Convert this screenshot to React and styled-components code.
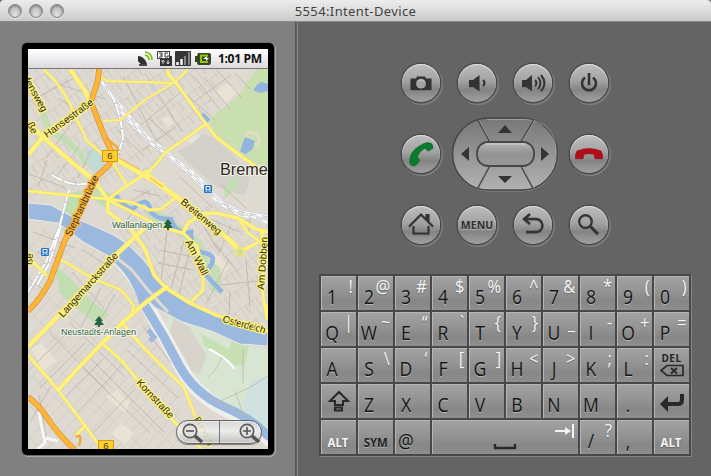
import React from "react";
import styled, { createGlobalStyle, css } from "styled-components";

const Global = createGlobalStyle`
  * { box-sizing: border-box; }
  html, body { margin: 0; padding: 0; overflow: hidden; background: #646464; }
`;

const Window = styled.div`
  width: 711px;
  height: 476px;
  display: flex;
  flex-direction: column;
  font-family: "Open Sans", "Noto Sans", sans-serif;
`;

const TitleBar = styled.header`
  height: 22px;
  flex: none;
  display: grid;
  grid-template-columns: 71px 1fr 71px;
  align-items: center;
  background: linear-gradient(#ececec, #dedede 45%, #cbcbcb);
  border-bottom: 1px solid #8b8b8b;
  border-radius: 4px 4px 0 0;
`;

const Lights = styled.div`
  display: flex;
  gap: 7px;
  padding-left: 8px;
`;

const Light = styled.span`
  width: 14px;
  height: 14px;
  border-radius: 50%;
  border: 1px solid #858585;
  background: radial-gradient(ellipse at 50% 90%, #e4e4e4, #c2c2c2 55%, #9e9e9e);
  box-shadow: inset 0 1px 2px #777, 0 1px 0 #eee;
`;

const Title = styled.h1`
  margin: 0;
  text-align: center;
  font: 400 13px/20px "Noto Sans", sans-serif;
  letter-spacing: 0.38px;
  color: #414141;
`;

const Body = styled.main`
  flex: 1;
  display: flex;
  min-height: 0;
`;

const DevicePane = styled.section`
  width: 295px;
  flex: none;
  padding: 21px 0 0 22px;
  background: #808080;
`;

const Divider = styled.div`
  width: 3px;
  flex: none;
  background: #606060;
  border-left: 1px solid #555;
  border-right: 1px solid #888;
`;

const Bezel = styled.div`
  width: 252px;
  height: 412px;
  padding: 6px;
  background: #000;
  border-radius: 5px;
  box-shadow: 0 0 0 1px #6b6b6b, 1px 1px 0 1px #a8a8a8;
`;

const Screen = styled.div`
  position: relative;
  width: 240px;
  height: 400px;
  overflow: hidden;
`;

const StatusBar = styled.div`
  height: 20px;
  display: flex;
  align-items: center;
  justify-content: flex-end;
  padding-right: 5px;
  background: linear-gradient(#fff, #efedf0 48%, #dddadd);
  border-bottom: 1px solid #777;
`;

const Clock = styled.time`
  font: 700 12.5px/19px "Open Sans", sans-serif;
  color: #111;
  width: 45px;
  margin-left: 5px;
  letter-spacing: -0.4px;
  white-space: nowrap;
  transform: scaleX(0.97);
  transform-origin: left;
`;

const Drawing = styled.svg`
  display: block;
  flex: none;
  overflow: ${(p) => (p.$clip ? "hidden" : "visible")};
`;

const ZoomControl = styled.div`
  position: absolute;
  left: 148px;
  top: 371px;
  width: 86px;
  height: 24px;
  display: flex;
  border: 1px solid #656565;
  border-radius: 12px;
  background: linear-gradient(#d5d5d5cc, #f0f0f0dd 45%, #bebebedd);
  box-shadow: 0 1px 1px #4449, inset 0 0 1px 1px #fff8;
`;

const ZoomHalf = styled.div`
  width: 42px;
  flex: none;
  padding-left: ${(p) => p.$pad}px;
  & + & { border-left: 1px solid #777; }
`;

const ControlPane = styled.section`
  flex: 1;
  padding: 26px 0 0 21px;
  background: #646464;
`;

const Pad = styled.div`
  width: 224px;
  margin-left: 74px;
  display: grid;
  grid-template-columns: repeat(4, 56px);
  grid-template-rows: repeat(3, 71px);
  place-items: center;
`;

const RoundButton = styled.button`
  width: 38px;
  height: 38px;
  margin-bottom: 1px;
  padding: 0;
  display: grid;
  place-items: center;
  border: 0;
  border-radius: 50%;
  background: linear-gradient(#bdbdbd, #a2a2a2 45%, #848484 68%, #a0a0a0);
  box-shadow: inset 0 1px 1px #dedede, 0 0 0 1.6px #4b4b4b, 1px 1px 0 2px #808080;
`;

const MenuText = styled.span`
  font: 700 10.5px/14px "Open Sans", sans-serif;
  letter-spacing: 0;
  color: #303030;
  text-shadow: 0 1px 0 #b9b9b9;
`;

const DPadSlot = styled.div`
  grid-column: span 2;
  margin-bottom: 1px;
`;

const Keyboard = styled.div`
  width: 372px;
  height: 182px;
  margin-top: 13px;
  padding: 2px;
  display: grid;
  grid-template-columns: repeat(10, 35px);
  grid-auto-rows: 34px;
  gap: 2px;
  background: #484848;
  box-shadow: 1px 1px 0 #858585;
`;

const Key = styled.button`
  grid-column: span ${(p) => p.$span || 1};
  display: grid;
  padding: 0;
  min-width: 0;
  border: 0;
  font-family: inherit;
  background: linear-gradient(#a3a3a3, #929292 50%, #868686 75%, #8f8f8f);
  box-shadow: inset 1px 1px 0 #b5b5b5;
  & > * { grid-area: 1 / 1; }
`;

const Main = styled.span`
  width: 22px;
  margin-top: 11px;
  font-size: 20px;
  line-height: 20px;
  display: flex;
  justify-content: center;
  transform: scaleX(0.88);
  color: #161616;
  text-shadow: 0 1px 0 #b4b4b4;
  align-self: start;
`;

const Alt = styled.span`
  justify-self: end;
  align-self: start;
  padding-right: 3px;
  font-size: 18px;
  line-height: 20px;
  transform: scaleX(0.92);
  transform-origin: right;
  color: #f5f5f5;
  text-shadow: 0 1px 1px #6a6a6a;
`;

const Word = styled.span`
  place-self: center;
  margin-top: 11px;
  font-size: 12px;
  font-weight: 700;
  line-height: 14px;
  transform: scaleX(0.95);
  ${(p) =>
    p.$dark
      ? css`color: #242424; text-shadow: 0 1px 0 #b4b4b4;`
      : css`color: #f5f5f5; text-shadow: 0 1px 1px #666;`}
`;

const DelKey = styled.span`
  display: flex;
  flex-direction: column;
  align-items: center;
  padding-top: 4px;
  font-size: 10px;
  font-weight: 700;
  line-height: 12px;
  letter-spacing: 0.5px;
  color: #242424;
`;

const KeyArt = styled.span`
  place-self: center;
`;

const SpaceArt = styled.span`
  align-self: stretch;
`;

const rail = [
  "M96 69 C108 96 130 116 147 136 S192 172 218 198 S250 214 268 219",
  "M98 76 C111 94 121 120 151 140 S194 182 222 203 L268 223",
  "M145 139 C170 158 201 173 210 192 S240 211 268 217",
];

const yellowRoads = [
  ["M43 69 Q59 82 70 104 L80 126 L87 141 L113 163 L128 187", 2.6],
  ["M70 69 L85 91 L91 103", 4.5],
  ["M28 155 L43 137 L67 118 L91 103", 4.5],
  ["M28 122 L43 137 L61 153 L80 169 L94 180", 4.5],
  ["M103 121 L120 120 L146 99 L175 82", 2.2],
  ["M98 75 L107 81 L175 83", 2.4],
  ["M168 69 L168 74 L176 83 L206 124 L217 138 L245 159 L268 174", 3.2],
  ["M188 69 L175 82", 2.4],
  ["M206 124 L166 152 L150 171 L119 191 L107 200", 3],
  ["M28 191 L66 195 L106 199 L131 202 L150 210 L161 209 L175 198", 3],
  ["M112 157 L133 169 L156 182 L178 198 L216 229 L233 243 L240 252", 5],
  ["M145 170 L154 180 L164 185", 3],
  ["M92 178 L101 190 L108 200 L108 212 L130 228 L145 249 L154 275 L166 288 L190 303 L216 315 L268 331", 3.6],
  ["M108 200 L128 210 L151 222 L172 230 L183 233", 3.2],
  ["M183 233 L188 223 L202 214 L215 213 L238 218 L256 229 L268 232", 3.6],
  ["M238 218 L248 233 L258 240", 2.8],
  ["M240 252 L262 240 L262 229", 3.6],
  ["M183 233 L197 246 L203 270 L203 290 L190 303", 3],
  ["M262 239 Q264 261 262 289 L267 320", 2.8],
  ["M152 221 L118 253 L91 281 L59 315 L28 347", 4.5],
  ["M28 257 L47 276", 3],
  ["M60 259 L90 277 L121 290 L134 306 L130 318", 2.6],
  ["M58 390 L85 361 L122 323 L145 303 L168 286", 4.2],
  ["M28 355 L58 390 L86 427 L102 449", 3],
  ["M102 343 L122 361 L143 387 L178 426 L202 449", 3],
  ["M122 323 L145 349 L167 371 L184 387 L195 416", 3],
  ["M85 426 L76 435", 3],
  ["M266 304 L268 318", 3],
];

const orangeRoads = [
  "M99 69 L98 80 L91 102 L104 135 L113 155 L109 165 L94 179 L79 212 L65 240 L50 281 Q40 300 28 311",
  "M28 397 Q39 405 48 419 T75 450",
];

const lanes = [
  "M28 102 L78 76 M58 98 L80 112 M74 120 L46 158 M61 85 L105 99 M80 145 L54 180 M91 150 L78 178 M134 131 L182 91 M117 130 L144 156 M150 119 L178 145 M142 151 L176 127 M123 76 L160 148 M145 73 L182 132",
  "M190 105 L213 88 L231 75 M182 91 L214 119 M204 77 L230 109 M216 69 L242 98 M193 75 L220 110 M235 73 L250 89",
  "M29 174 L66 188 M47 160 L38 187 M33 232 L75 248 M37 252 L60 259 M29 279 L47 292 M83 250 L106 265 M72 272 L104 308 M101 288 L81 327 M115 294 L91 336",
  "M28 371 L70 330 M39 389 L86 342 M64 398 L103 359 M76 414 L122 365 M93 433 L135 389 M49 332 L106 390 M70 323 L125 377 M82 367 L150 433 M89 357 L165 433 M50 388 L31 420 M39 395 L46 438 M127 350 L178 398 M143 326 L171 363",
  "M160 250 L198 258 M158 263 L194 270 M167 231 L161 282 M184 240 L171 289 M190 249 L179 294 M213 242 L238 272 M228 261 L206 304 M220 285 L258 281 M230 292 L229 315 M246 259 L250 307 M204 227 L219 252 M211 219 L239 232 M231 225 L219 253",
  "M133 190 L160 196 M119 207 L151 190 M133 210 L125 225 M180 177 L213 208 M220 184 L246 208 M251 211 L249 231",
];

const sideTracks =
  "M110 92Q121 112 123 139L118 154M52 175Q72 188 89 183M69 190L59 228L46 262L28 292M61 226L49 264L36 287";

function Label({ x, y, angle = 0, size = 10, children, ...rest }) {
  return (
    <text x={x} y={y} fontSize={size} transform={`rotate(${angle} ${x} ${y})`} {...rest}>
      {children}
    </text>
  );
}

function RouteSign({ x, y }) {
  return (
    <g>
      <rect x={x} y={y} width="15" height="11" fill="#ffce2c" stroke="#d29913" />
      <text x={x + 7.5} y={y + 8.5} textAnchor="middle" fontSize="9.5" strokeWidth="0">6</text>
    </g>
  );
}

function Tree({ x, y }) {
  return <path transform={`translate(${x} ${y})`} d="M0-5L4 0H2L5 4H1V6H-1V4H-5L-2 0H-4Z" fill="#24623f" />;
}

function Station({ x, y }) {
  return (
    <g transform={`translate(${x} ${y})`}>
      <rect width="8" height="8" rx="1" fill="#2878c1" />
      <path d="M2 1.5H6V5H2ZM2.5 6L1.5 7M5.5 6L6.5 7" fill="none" stroke="#fff" />
    </g>
  );
}

function CityMap() {
  return (
    <Drawing $clip width="240" height="380" viewBox="28 69 240 380">
      <defs>
        <pattern id="blocksA" width="13" height="17" patternUnits="userSpaceOnUse" patternTransform="rotate(-36)">
          <path d="M0 0H13M0 0V17M6 0V10" stroke="#c6beb4" strokeWidth=".8" fill="none" />
        </pattern>
        <pattern id="blocksB" width="10" height="23" patternUnits="userSpaceOnUse" patternTransform="rotate(43)">
          <path d="M0 0H10M0 0V23" stroke="#c8c0b7" strokeWidth=".8" fill="none" />
        </pattern>
      </defs>
      <path d="M28 69H268V449H28Z" fill="#dedad2" />
      <path d="M28 69H220L204 125L145 175L28 200Z" fill="url(#blocksA)" />
      <path d="M28 224L104 250L140 300L195 449H28Z" fill="url(#blocksB)" />
      <path d="M145 185L268 220V330L165 292L114 239Z" fill="url(#blocksA)" />
      <path d="M194 143L203 133L216 139L238 160L250 180L244 196L217 187L190 164L177 151Z" fill="#d3cfc9" />
      <path d="M216 91L227 83L239 91L225 104ZM162 119L168 116L174 123L168 127ZM185 139L195 132L200 137L191 143ZM31 349L41 343L57 361L43 371ZM106 397L116 390L130 402L125 413ZM112 434L121 423L134 433L125 445ZM210 252L221 257L229 269L217 276Z" fill="#e9e2d5" />
      <path d="M256 69H268V174L245 159L217 138L209 120L238 96Z" fill="#c9dfb0" />
      <path d="M253 90L258 84L262 82L268 84V91L260 93ZM240 151L245 137L255 141L252 150L245 154Z" fill="#91b5df" />
      <path d="M245 137Q249 128 257 135Q263 142 255 145" fill="none" stroke="#e5dcc5" strokeWidth="3" />
      <path d="M28 85Q37 92 43 113T62 137L80 153L87 165" fill="none" stroke="#c2ddb0" strokeWidth="6" />
      <path d="M86 149L99 151L105 164L97 174L87 163Z" fill="#c2dad4" />
      <path d="M68 194L96 187L108 192L118 203L104 207L91 198L75 216L65 232L60 226ZM54 265L71 279L93 302L110 315L96 324L79 310L60 293ZM224 190L232 177L239 177L237 187L225 199Z" fill="#c2ddb0" />
      <path d="M145 209L166 214L184 229L202 241L207 257L220 268L222 295L211 290L201 260L190 244L172 230L155 224Z" fill="#c5ddb6" />
      <path d="M115 194Q126 211 134 208Q148 194 151 212Q157 220 171 219Q177 236 191 232Q191 251 204 253T211 265L205 274L222 292" fill="none" stroke="#91b4e1" strokeWidth="4.5" />
      <path d="M167 315L193 319L218 331L234 345L268 349V438L231 413L206 397L187 369L166 337Z" fill="#d7e5d2" />
      <path d="M201 334L229 349L232 341L249 345L245 364L236 366L222 359L204 345Z" fill="#c6dfb3" />
      <path d="M174 317L190 328L207 356L199 374L185 369L168 337Z" fill="#d8d4cb" />
      <path d="M253 380L268 376V440L247 430L243 401Z" fill="#cfe2df" />
      <path d="M109 251Q136 270 148 307L166 340L185 374Q199 397 228 411T272 442" fill="none" stroke="#eeeeeb" strokeWidth="14" />
      <path d="M28 203L51 205L73 217L105 231Q123 238 142 258L165 287Q187 305 217 316L268 333V346L240 344L211 331L180 321L154 307L126 274L110 257L83 242L58 223L28 219Z" fill="#9bb9df" stroke="#e9e6dc" strokeWidth="1.2" />
      <path d="M111 254Q135 271 144 304L164 337L179 365Q194 393 225 407T270 438" fill="none" stroke="#9bb9df" strokeWidth="9" />
      <path d="M117 258L132 270L147 289L168 312" fill="none" stroke="#dedad2" strokeWidth="3" />
      <path d="M148 330L154 337L150 341" fill="none" stroke="#9bb9df" strokeWidth="5" />
      <path d="M202 114L209 121" stroke="#91b4e1" strokeWidth="4" />
      <g fill="none" stroke="#bcb3aa" strokeWidth=".8">{lanes.map((d) => <path key={d} d={d} />)}</g>
      <path d="M209 349Q230 360 234 369" stroke="#fff" fill="none" strokeWidth="2" />
      <path d="M216 403L249 388L268 376M222 357L216 369L208 377M243 349V383M208 397L244 415M235 391L246 422" fill="none" stroke="#bcb8a9" strokeWidth=".8" />
      {rail.map((d) => (
        <g key={d} fill="none">
          <path d={d} stroke="#c3c4c8" strokeWidth="3.6" />
          <path d={d} stroke="#fafafb" strokeWidth="2.8" />
          <path d={d} stroke="#b9babf" strokeWidth="1" strokeDasharray="7 5" />
        </g>
      ))}
      <path d={sideTracks} fill="none" stroke="#b9bcc1" strokeWidth="2.8" />
      <path d={sideTracks} fill="none" stroke="#fff" strokeWidth="1.9" strokeDasharray="12 1" />
      <path d="M39 412L45 443L38 449M46 438L58 441" fill="none" stroke="#f5f6f8" strokeWidth="3" />
      <g fill="none" strokeLinejoin="round">
        {yellowRoads.map(([d, w]) => <path key={d} d={d} stroke="#e6d67e" strokeWidth={w + 0.5} />)}
        {yellowRoads.map(([d, w]) => <path key={d} d={d} stroke="#fff27a" strokeWidth={w - 0.3} />)}
        {orangeRoads.map((d) => <path key={d} d={d} stroke="#cf8b2a" strokeWidth="5.6" />)}
        {orangeRoads.map((d) => <path key={d} d={d} stroke="#ffb537" strokeWidth="4.4" />)}
        <path d="M106 138L117 147L119 151M79 446Q83 433 76 437" stroke="#f0ac37" strokeWidth="2.5" />
        <path d="M119 158L139 169M150 178L163 187" stroke="#f2b94e" strokeWidth="1.2" />
        <circle cx="240" cy="252" r="4" fill="#c4dfaa" stroke="#f4e567" strokeWidth="2" />
      </g>
      <g fontFamily="Liberation Sans, sans-serif" fill="#292823" stroke="#fff27a" strokeWidth="2.6" strokeLinejoin="round" paintOrder="stroke">
        <Label x={24} y={80} angle={61}>fensweg</Label>
        <Label x={47} y={138} angle={-36} size={10.2}>Hansestraße</Label>
        <Label x={27} y={124} angle={65}>ße</Label>
        <Label x={71} y={237} angle={-65} size={10} textLength="66" stroke="#ffb537">Stephanibrücke</Label>
        <Label x={180} y={203} angle={40}>Breitenweg</Label>
        <Label x={185} y={242} angle={63} size={10.4}>Am Wall</Label>
        <Label x={264} y={290} angle={-86}>Am Dobben</Label>
        <Label x={63} y={318} angle={-48}>Langemarckstraße</Label>
        <Label x={136} y={383} angle={47}>Kornstraße</Label>
        <Label x={222} y={322} angle={15} textLength="44">Osterdeich</Label>
        <Label x={32} y={265} angle={-85}>ße</Label>
        <Label x={194} y={419} angle={60} textLength="31" size={9}>Buntentg</Label>
      </g>
      <g fontFamily="Liberation Sans, sans-serif" stroke="#f5f2e9" strokeWidth="2" paintOrder="stroke" strokeLinejoin="round">
        <text x="220" y="175" fontSize="16.2" fill="#282622">Breme</text>
        <text x="112" y="228" fontSize="9.2" fill="#285b3d">Wallanlagen</text>
        <text x="61" y="335" fontSize="9.2" textLength="75" fill="#285b3d">Neustadts-Anlagen</text>
      </g>
      <g fontFamily="Liberation Sans, sans-serif" fill="#49350b">
        <RouteSign x={102.5} y={150.5} />
        <RouteSign x={98.5} y={440.5} />
      </g>
      <Tree x={168} y={224} />
      <Tree x={99} y={321} />
      <Station x={204} y={185} />
      <Station x={41} y={248} />
    </Drawing>
  );
}

function StatusIcons() {
  return (
    <Drawing width="76" height="18" viewBox="137 50 76 18">
      <path d="M138 56Q137 64 146 65L143 62L148 57L145 60Z" fill="#303030" />
      <path d="M138 56Q144 56 147 64Q141 66 138 61Z" fill="#303030" />
      <path d="M139 65H147" stroke="#484848" strokeWidth="2" />
      <path d="M145 55Q149 56 149 60M145 52Q152 53 152 60" fill="none" stroke="#7ebd15" strokeWidth="1.7" />
      <rect x="157.5" y="51.5" width="12" height="7" fill="#fff" stroke="#424242" />
      <path d="M159 53H162V57H159M160 55H162M168 53H165V57H168V55" fill="none" stroke="#333" />
      <path d="M160 59H169V56H172V66H160Z" fill="#333" />
      <path d="M163 61V64M161.5 62L163 60L164.5 62M168 60V64M166.5 62L168 64L169.5 62" fill="none" stroke="#ddd" />
      <rect x="175" y="51" width="16" height="15" rx="1" fill="#363636" />
      <path d="M177.5 65V62M181.5 65V59" stroke="#fff" strokeWidth="2.4" />
      <path d="M185 65V56M189 65V52" stroke="#868686" strokeWidth="2" />
      <path d="M195 56H197L198 53H209Q211 53 211 55V63Q211 65 209 65H199Q197 65 197 62H195Z" fill="#3b421f" />
      <path d="M208 55.5H201V62H208" fill="none" stroke="#8dc610" strokeWidth="2" />
      <path d="M203 59L207 56V58H209L206 61V59Z" fill="#fff" />
    </Drawing>
  );
}

function ZoomIcon({ plus }) {
  return (
    <Drawing width="23" height="22" viewBox="-8 -10 23 22">
      <path d="M5 5L12 11" stroke="#555" strokeWidth="3.6" />
      <circle r="6.7" fill="#ddd9" stroke="#5d5d5d" strokeWidth="1.7" />
      <path d={plus ? "M-4 0H4M0-4V4" : "M-4 0H4"} stroke="#555" strokeWidth="1.6" />
    </Drawing>
  );
}

const icons = {
  camera: <><path d="M-10.5-4.5H-5L-4-6.5H4L5-4.5H10.5V7H-10.5Z" fill="#333" /><circle cy=".7" r="4.9" fill="#a3a3a3" /><path d="M-4-1Q0-5 4-1" stroke="#ccc" fill="none" /></>,
  quiet: <><path d="M-8-3H-4L2.5-8V8L-4 4H-8Z" fill="#333" /><path d="M6-3Q9 0 6 3" stroke="#333" strokeWidth="2" fill="none" /></>,
  loud: <><path d="M-11-3H-7L-1-8V8L-7 4H-11Z" fill="#333" /><path d="M2-3Q5 0 2 3M5-6Q10 0 5 6M8-8Q15 0 8 8" stroke="#333" strokeWidth="1.9" fill="none" /></>,
  power: <path d="M-4-5.5A7 7 0 1 0 4-5.5M0-10V2" stroke="#333" strokeWidth="2.5" fill="none" />,
  call: <path d="M2-10Q7-13 11-10L12-6L7-3L4-6Q-2-3-4 3L-1 6L-5 11Q-9 13-11 10Q-13-3 2-10Z" fill="#087b2c" stroke="#056121" strokeWidth=".6" />,
  end: <path d="M-12-3Q0-8 12-3Q14 0 13.5 4.5H6L5 0Q0-1-5 0L-6 4.5H-13.5Q-14 0-12-3Z" fill="#b50c17" stroke="#860b12" strokeWidth=".6" />,
  home: <path d="M-12 1.5L0-10.5L12 1.5M5.5-6V-10H7.5V-4M-7.5 1V8.5H7.5V1" stroke="#333" strokeWidth="2.1" fill="none" />,
  back: <path d="M-3-11L-9-6L-3-1M-8-6H3A6.5 6.5 0 0 1 3 7H-7" stroke="#333" strokeWidth="2.4" fill="none" />,
  search: <><circle cx="-3.5" cy="-3.5" r="6.3" fill="none" stroke="#333" strokeWidth="2.2" /><path d="M1 1L9 9" stroke="#333" strokeWidth="3" /></>,
};

function PadButton({ icon }) {
  return (
    <RoundButton aria-label={icon}>
      <Drawing width="36" height="36" viewBox="-18 -18 36 36">
        <g transform="translate(0 1)" opacity=".2">{icons[icon]}</g>
        {icons[icon]}
      </Drawing>
    </RoundButton>
  );
}

function DPad() {
  return (
    <Drawing width="110" height="76" viewBox="0 0 110 76">
      <defs>
        <linearGradient id="pad" x2="0" y2="1"><stop stopColor="#777" /><stop offset="1" stopColor="#b2b2b2" /></linearGradient>
        <linearGradient id="nub" x2="0" y2="1"><stop stopColor="#b8b8b8" /><stop offset=".5" stopColor="#929292" /><stop offset="1" stopColor="#999" /></linearGradient>
      </defs>
      <rect x="3" y="3" width="105" height="72" rx="36" fill="none" stroke="#888" />
      <rect x="2.5" y="2" width="105" height="72" rx="36" fill="url(#pad)" stroke="#474747" strokeWidth="1.6" />
      <path d="M37 3.5H75Q106 5 106 37" fill="none" stroke="#aaa" strokeWidth=".7" />
      <path d="M28 4L40 26M84 4L71 26M40 50L28 72M71 50L83 72" stroke="#484848" strokeWidth="1.6" />
      <path d="M29 4L41 26M85 4L72 26M41 50L29 72M72 50L84 72" stroke="#ababab" strokeWidth=".7" />
      <rect x="27" y="26" width="57" height="24" rx="11" fill="url(#nub)" stroke="#484848" strokeWidth="1.8" />
      <path d="M35 28H76" stroke="#d1d1d1" />
      <path d="M48 17L55 9L62 17ZM48 60L55 67L62 60ZM11 38L19 31V45ZM91 31L99 38L91 45Z" fill="#343434" />
    </Drawing>
  );
}

const keys = [
  ["1", "!"], ["2", "@"], ["3", "#"], ["4", "$"], ["5", "%"], ["6", "^"], ["7", "&"], ["8", "*"], ["9", "("], ["0", ")"],
  ["Q", "|"], ["W", "~"], ["E", "“"], ["R", "`"], ["T", "{"], ["Y", "}"], ["U", "_"], ["I", "-"], ["O", "+"], ["P", "="],
  ["A"], ["S", "\\"], ["D", "‘"], ["F", "["], ["G", "]"], ["H", "<"], ["J", ">"], ["K", ";"], ["L", ":"], ["del"],
  ["shift"], ["Z"], ["X"], ["C"], ["V"], ["B"], ["N"], ["M"], ["."], ["enter"],
  ["ALT"], ["SYM"], ["@"], ["space"], ["/", "?"], [","], ["ALT"],
];

function KeyContent({ main, alt }) {
  if (main === "ALT" || main === "SYM") return <Word $dark={main === "SYM"}>{main}</Word>;
  if (main === "del")
    return (
      <DelKey>DEL
        <Drawing width="26" height="14" viewBox="0 0 26 14">
          <path d="M8 1.5H24V11.5H8L2 6.5Z" fill="none" stroke="#292929" strokeWidth="1.7" />
          <path d="M12 4L18 9.5M18 4L12 9.5" stroke="#292929" strokeWidth="2" />
        </Drawing>
      </DelKey>
    );
  if (main === "shift")
    return (
      <KeyArt><Drawing width="24" height="24" viewBox="0 0 24 24">
        <path d="M12 3L3 12H8V16H16V12H21ZM8 18.5H15V21.5H8Z" fill="none" stroke="#292929" strokeWidth="2" />
      </Drawing></KeyArt>
    );
  if (main === "enter")
    return (
      <KeyArt><Drawing width="28" height="22" viewBox="0 0 28 22">
        <path d="M24 4V10Q24 14 20 14H7" fill="none" stroke="#292929" strokeWidth="4" />
        <path d="M2 14L10 6V22Z" fill="#292929" />
      </Drawing></KeyArt>
    );
  if (main === "space")
    return (
      <SpaceArt><Drawing width="146" height="34" viewBox="0 0 146 34">
        <path d="M63 24V28H83V24" fill="none" stroke="#292929" strokeWidth="2.4" />
        <path d="M123 11H136M141 4V18" fill="none" stroke="#f5f5f5" strokeWidth="2" />
        <path d="M133 7L139 11L133 15Z" fill="#f5f5f5" />
      </Drawing></SpaceArt>
    );
  return <><Main>{main}</Main>{alt && <Alt>{alt}</Alt>}</>;
}

export default function App() {
  return (
    <Window>
      <Global />
      <TitleBar>
        <Lights><Light /><Light /><Light /></Lights>
        <Title>5554:Intent-Device</Title>
      </TitleBar>
      <Body>
        <DevicePane>
          <Bezel>
            <Screen>
              <StatusBar><StatusIcons /><Clock>1:01 PM</Clock></StatusBar>
              <CityMap />
              <ZoomControl>
                <ZoomHalf $pad={5}><ZoomIcon /></ZoomHalf>
                <ZoomHalf $pad={19}><ZoomIcon plus /></ZoomHalf>
              </ZoomControl>
            </Screen>
          </Bezel>
        </DevicePane>
        <Divider />
        <ControlPane>
          <Pad>
            {["camera", "quiet", "loud", "power", "call"].map((icon) => <PadButton key={icon} icon={icon} />)}
            <DPadSlot><DPad /></DPadSlot>
            <PadButton icon="end" />
            <PadButton icon="home" />
            <RoundButton><MenuText>MENU</MenuText></RoundButton>
            <PadButton icon="back" />
            <PadButton icon="search" />
          </Pad>
          <Keyboard>
            {keys.map(([main, alt], i) => (
              <Key key={i} $span={main === "space" ? 4 : 1}><KeyContent main={main} alt={alt} /></Key>
            ))}
          </Keyboard>
        </ControlPane>
      </Body>
    </Window>
  );
}
